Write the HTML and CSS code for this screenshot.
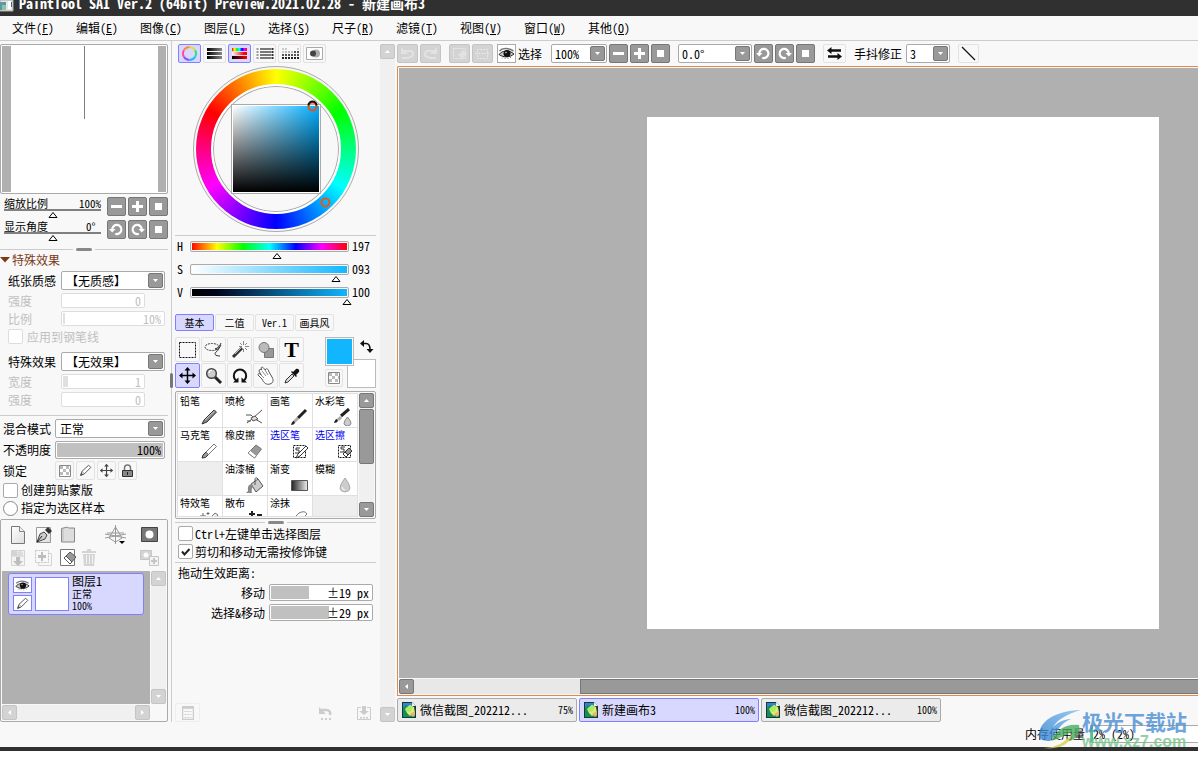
FILE: index.html
```html
<!DOCTYPE html>
<html lang="zh-CN">
<head>
<meta charset="utf-8">
<title>PaintTool SAI Ver.2</title>
<link rel="stylesheet" href="styles.css">
</head>
<body>
<svg class="defs" aria-hidden="true">
  <defs>
    <linearGradient id="g-grey"><stop offset="0" stop-color="#222"/><stop offset="1" stop-color="#eee"/></linearGradient>
    <linearGradient id="g-black"><stop offset="0" stop-color="#000"/><stop offset="1" stop-color="#888"/></linearGradient>
    <linearGradient id="g-page" x2="1" y2="1"><stop offset="0" stop-color="#fff"/><stop offset="1" stop-color="#ddd"/></linearGradient>
    <linearGradient id="g-red"><stop offset="0" stop-color="#fff"/><stop offset=".8" stop-color="#f00"/></linearGradient>
    <linearGradient id="g-dark"><stop offset="0" stop-color="#000"/><stop offset="1" stop-color="#f00"/></linearGradient>
    <linearGradient id="g-hue"><stop offset="0" stop-color="#f00"/><stop offset=".17" stop-color="#ff0"/><stop offset=".33" stop-color="#0f0"/><stop offset=".5" stop-color="#0ff"/><stop offset=".67" stop-color="#00f"/><stop offset=".83" stop-color="#f0f"/><stop offset="1" stop-color="#f00"/></linearGradient>
    <linearGradient id="g-swoosh" x1="0" y1="1" x2="1" y2="0"><stop offset="0" stop-color="#2f7fd0"/><stop offset="1" stop-color="#7cc0ee"/></linearGradient>
  </defs>
  <symbol id="i-minus" viewBox="0 0 17 17"><path d="M3 7h11v3H3z" fill="#fff"/></symbol>
  <symbol id="i-plus" viewBox="0 0 17 17"><path d="M3 7h4V3h3v4h4v3h-4v4H7v-4H3z" fill="#fff"/></symbol>
  <symbol id="i-stop" viewBox="0 0 17 17"><path d="M5 5h7v7H5z" fill="#fff"/></symbol>
  <symbol id="i-ccw" viewBox="0 0 17 17"><path d="M4.200 8.500a4.600 4.600 0 1 1 3 4.300" fill="none" stroke="#fff" stroke-width="2.200"/><path d="M1 8h6.500L4.200 11.500z" fill="#fff"/></symbol>
  <symbol id="i-cw" viewBox="0 0 17 17"><path d="M12.800 8.500a4.600 4.600 0 1 0-3 4.300" fill="none" stroke="#fff" stroke-width="2.200"/><path d="M16 8H9.500l3.300 3.500z" fill="#fff"/></symbol>
  <symbol id="i-drop" viewBox="0 0 13 13"><path d="M4 5h5L6.500 8z" fill="#fff"/></symbol>
  <symbol id="i-up" viewBox="0 0 13 13"><path d="M4 8h5L6.500 5z" fill="#fff"/></symbol>
  <symbol id="i-left" viewBox="0 0 13 13"><path d="M8 4v5L5 6.500z" fill="#fff"/></symbol>
  <symbol id="i-right" viewBox="0 0 13 13"><path d="M5 4v5l3-2.500z" fill="#fff"/></symbol>
  <symbol id="i-eye" viewBox="0 0 17 17"><path d="M1.500 6C4 3 10 2.500 15.500 6" fill="none" stroke="#777" stroke-width="1.500"/><path d="M1 9.500C4 5.500 11 4.500 16 9 12 12.500 6 13 1 9.500z" fill="#ccc" stroke="#222"/><circle cx="9" cy="8.500" r="3.500" fill="#111"/><circle cx="8" cy="7.500" r=".8" fill="#ddd"/><path d="M4 13.500l1-1M7 14v-1M10 14v-1M13 13l-1-1" stroke="#888"/></symbol>
  <symbol id="i-pencil" viewBox="0 0 17 17"><path d="M3 14l1.500-4.500L12 2.500l2.500 2.500-7.500 7.500z" fill="#fff" stroke="#444"/><path d="M3 14l1-2.500 1.500 1.500zM4.500 9.500l2.500 2.500" fill="#333" stroke="#555" stroke-width=".7"/></symbol>
  <symbol id="i-move" viewBox="0 0 19 19"><path d="M9.500 3v13M3 9.500h13" stroke="currentColor" stroke-width="1.500"/><path d="M9.500 1l3 3.500h-6zM9.500 18l3-3.500h-6zM1 9.500l3.500-3v6zM18 9.500l-3.500-3v6z" fill="currentColor"/></symbol>
  <symbol id="i-check" viewBox="0 0 12 12"><path d="M.5.500h11v11H.5z" fill="#fff" stroke="#888"/><path d="M1 1h3v3H1zM7 1h3v3H7zM4 4h3v3H4zM1 7h3v3H1zM7 7h3v3H7zM10 4h1v3h-1z" fill="#bbb"/></symbol>
  <symbol id="i-undo" viewBox="0 0 19 17"><path d="M6 6h6a3 3 0 0 1 0 6h-1" fill="none" stroke="currentColor" stroke-width="2"/><path d="M3 2v7h7zM4 12h7v2H4z" fill="currentColor"/></symbol>
  <symbol id="i-doc" viewBox="0 0 14 16"><path d="M0 0h10l4 4v12H0z" fill="#153a36"/><path d="M1 1h9v7H1z" fill="#3484cf"/><path d="M1 6l3-3 4 2 5 7v3H1z" fill="#168c5a"/><path d="M3 7l5-4 4 2 1 6-5 3-3-3z" fill="#dced71"/><path d="M4 6l4-3 3 2-3 5-4-1z" fill="#a7ed65"/><path d="M8 12l5-3v4l-2 2z" fill="#e5b76c"/><path d="M10 0v4h4z" fill="#eee"/></symbol>
</svg>

<header class="title">
  <svg class="title-icon" width="14" height="12"><path d="M0 0h13v11H0z" fill="#e5e5e5" stroke="#aaa"/><path d="M0 2h6v8H0z" fill="#5d98a3"/><path d="M2 5h4v5H2z" fill="#8fc2a8"/><path d="M8 1h3v8H8z" fill="#fff"/><path d="M11 2h1v5h-1z" fill="#278"/></svg>
  <h1>PaintTool SAI Ver.2 (64bit) Preview.2021.02.28 - 新建画布3</h1>
</header>
<nav class="menu">
  <button>文件(<u>F</u>)</button><button>编辑(<u>E</u>)</button><button>图像(<u>C</u>)</button><button>图层(<u>L</u>)</button><button>选择(<u>S</u>)</button><button>尺子(<u>R</u>)</button><button>滤镜(<u>T</u>)</button><button>视图(<u>V</u>)</button><button>窗口(<u>W</u>)</button><button>其他(<u>O</u>)</button>
</nav>

<main class="work">
  <aside class="left">
    <div class="navigator"><div class="nav-page"><i class="nav-line"></i></div></div>
    <div class="nav-row">
      <div class="nav-slide"><label for="zoom">缩放比例</label><output>100%</output><i class="rail"></i><input class="thumb" id="zoom" type="range" value="50"></div>
      <button class="sq" aria-label="缩小"><svg><use href="#i-minus"/></svg></button><button class="sq" aria-label="放大"><svg><use href="#i-plus"/></svg></button><button class="sq" aria-label="重置"><svg><use href="#i-stop"/></svg></button>
    </div>
    <div class="nav-row">
      <div class="nav-slide"><label for="angle">显示角度</label><output>0° </output><i class="rail"></i><input class="thumb" id="angle" type="range" value="50"></div>
      <button class="sq" aria-label="左转"><svg><use href="#i-ccw"/></svg></button><button class="sq" aria-label="右转"><svg><use href="#i-cw"/></svg></button><button class="sq" aria-label="重置角度"><svg><use href="#i-stop"/></svg></button>
    </div>
    <div class="splitter"><i></i></div>
    <button class="fold"><svg width="10" height="6"><path d="M0 0h10L5 5.500z" fill="#7a3a18"/></svg>特殊效果</button>
    <div class="effects">
      <div class="row"><label for="paper">纸张质感</label><span class="combo"><select id="paper"><option>【无质感】</option></select><i class="arrow"><svg><use href="#i-drop"/></svg></i></span></div>
      <div class="row off"><label for="p1">强度</label><input class="val short" id="p1" value="0" disabled></div>
      <div class="row off"><label for="p2">比例</label><input class="val tick" id="p2" value="10%" disabled></div>
      <div class="row off"><input class="box" type="checkbox" id="pen" disabled><label class="wide" for="pen">应用到钢笔线</label></div>
      <div class="row second"><label for="fx">特殊效果</label><span class="combo"><select id="fx"><option>【无效果】</option></select><i class="arrow"><svg><use href="#i-drop"/></svg></i></span></div>
      <div class="row off"><label for="p3">宽度</label><input class="val short tick wider" id="p3" value="1" disabled></div>
      <div class="row off"><label for="p4">强度</label><input class="val short" id="p4" value="0" disabled></div>
    </div>
    <div class="blend">
      <div class="row"><label for="mode">混合模式</label><span class="combo"><select id="mode"><option>正常</option></select><i class="arrow"><svg><use href="#i-drop"/></svg></i></span></div>
      <div class="row"><label for="opac">不透明度</label><input class="val full" id="opac" value="100%"></div>
      <div class="row locks"><span class="lbl">锁定</span>
        <button class="flat" aria-label="锁定透明"><svg width="12" height="12"><use href="#i-check"/></svg></button>
        <button class="flat" aria-label="锁定绘制"><svg width="15" height="15"><use href="#i-pencil"/></svg></button>
        <button class="flat" aria-label="锁定移动"><svg width="15" height="15"><use href="#i-move"/></svg></button>
        <button class="flat" aria-label="全部锁定"><svg width="13" height="13"><path d="M3.500 6V4a3 3 0 0 1 6 0v2" fill="none" stroke="#777" stroke-width="1.500"/><path d="M1.500 6.500h10v6h-10z" fill="#888" stroke="#333"/><path d="M6 8h1v3H6z" fill="#222"/></svg></button>
      </div>
      <div class="row opt"><input class="box" type="checkbox" id="clip"><label for="clip">创建剪贴蒙版</label></div>
      <div class="row opt"><input class="box round" type="radio" id="src"><label for="src">指定为选区样本</label></div>
    </div>
    <section class="layers">
      <div class="layer-tools">
        <button aria-label="新建图层"><svg width="18" height="18"><path d="M2.500.500h8l5 5v12h-13z" fill="url(#g-page)" stroke="#777"/><path d="M10.500.500v5h5" fill="#eee" stroke="#888"/></svg></button>
        <button aria-label="新建钢笔图层"><svg width="18" height="18"><path d="M2.500 1.500h14v15h-14z" fill="url(#g-page)" stroke="#999"/><path d="M3 16l3-8 4-2 3 3-2 4z" fill="#ccc" stroke="#444"/><path d="M3 16l5-6" stroke="#222"/><path d="M11 4l3-3 4 4-3 3z" fill="#333"/></svg></button>
        <button aria-label="新建图层组"><svg width="18" height="18"><path d="M2.500 2.500l6-1.500 1 1h6v14h-13z" fill="#ddd" stroke="#888"/><path d="M4 3v12" stroke="#bbb"/></svg></button>
        <span></span>
        <button aria-label="透视尺"><svg width="22" height="20"><path d="M10.500 0v19M0 9l21 4M0 13l21-4M10.500 2L4 13l6.500 4 6.500-4zM2 8h17" fill="none" stroke="#999"/><path d="M14 16h6l-3 3z" fill="#000"/></svg></button>
        <button aria-label="图层蒙版"><svg width="18" height="17"><path d="M.5 1.500h16v14H.5z" fill="#777" stroke="#444"/><circle cx="8.500" cy="8.500" r="4" fill="#fff"/></svg></button>
        <button class="dim" aria-label="向下合并"><svg width="18" height="18"><path d="M2.500 1.500h13v15h-13zM2 7h14" fill="#eee" stroke="#aaa"/><path d="M3 2h5v5H3z" fill="#aaa"/><circle cx="11" cy="5" r="3" fill="#bbb"/><path d="M7 8h4v4h3l-5 5-5-5h3z" fill="#777"/></svg></button>
        <button class="dim" aria-label="添加图层"><svg width="18" height="18"><path d="M4.500 4.500h13v12h-13z" fill="none" stroke="#aaa"/><path d="M1.500 1.500h13v12h-13z" fill="#f8f8f8" stroke="#888" stroke-dasharray="2 1"/><path d="M7 3h2v3h3v3H9v3H7V9H4V6h3z" fill="#777"/></svg></button>
        <button aria-label="清除图层"><svg width="18" height="18"><path d="M1.500.500h14v16h-14z" fill="#fff" stroke="#777"/><path d="M5 9l6-6 6 5-6 7z" fill="#999" stroke="#555"/><path d="M5 9l6 6 2-2-6-6z" fill="#fff" stroke="#555"/></svg></button>
        <button class="dim" aria-label="删除图层"><svg width="18" height="18"><path d="M3 5h12l-1 12H4zM2 2h14v2H2zM7 0h4v2H7z" fill="#aaa"/><path d="M6.500 6v9M9.500 6v9M12.500 6v9" stroke="#eee"/></svg></button>
        <span></span>
        <button class="dim" aria-label="应用蒙版"><svg width="20" height="18"><path d="M.5 1.500h11v9H.5z" fill="#aaa" stroke="#888"/><circle cx="6" cy="6" r="2.500" fill="#fff"/><path d="M9.500 7.500h9v9h-9z" fill="#eee" stroke="#888"/><path d="M13 9h2v2h2v2h-2v2h-2v-2h-2v-2h2z" fill="#888"/></svg></button>
      </div>
      <div class="layer-view">
        <div class="layer-list">
          <article class="layer">
            <div class="layer-flags"><button aria-label="显示"><svg width="17" height="15"><use href="#i-eye"/></svg></button><button aria-label="绘制"><svg width="17" height="15"><use href="#i-pencil"/></svg></button></div>
            <div class="layer-thumb"></div>
            <div class="layer-info"><b>图层1</b><span>正常</span><span>100%</span></div>
          </article>
        </div>
        <div class="sb v"><button class="sbb pale" aria-label="上"><svg><use href="#i-up"/></svg></button><button class="sbb pale" aria-label="下"><svg><use href="#i-drop"/></svg></button></div>
        <div class="sb h"><button class="sbb pale" aria-label="左"><svg><use href="#i-left"/></svg></button><button class="sbb pale" aria-label="右"><svg><use href="#i-right"/></svg></button></div>
      </div>
    </section>
  </aside>

  <section class="mid">
    <i class="grip"></i>
    <div class="modes">
      <button class="on" aria-label="色环"><svg width="17" height="17"><g fill="none" stroke-width="2"><path d="M8.500 2a6.500 6.500 0 0 1 5.600 3.200" stroke="#dd4"/><path d="M14.100 5.200a6.500 6.500 0 0 1 0 6.500" stroke="#3d7"/><path d="M14.100 11.700a6.500 6.500 0 0 1-5.600 3.300" stroke="#2bf"/><path d="M8.500 15a6.500 6.500 0 0 1-5.600-3.300" stroke="#85f"/><path d="M2.900 11.700a6.500 6.500 0 0 1 0-6.500" stroke="#f4a"/><path d="M2.900 5.200A6.500 6.500 0 0 1 8.500 2" stroke="#f84"/></g></svg></button>
      <button aria-label="RGB"><svg width="17" height="13"><path d="M1 1h15v3H1zM1 5h15v3H1zM1 9h15v3H1z" fill="url(#g-black)"/></svg></button>
      <button class="on" aria-label="HSV"><svg width="17" height="13"><path d="M1 1h15v3H1z" fill="url(#g-hue)"/><path d="M1 5h15v3H1z" fill="url(#g-red)"/><path d="M1 9h15v3H1z" fill="url(#g-dark)"/></svg></button>
      <button aria-label="混色"><svg width="18" height="13"><path d="M1.500 1v12" stroke="#999" stroke-width="2" stroke-dasharray="2 1"/><path d="M16.500 1v12" stroke="#333" stroke-width="2" stroke-dasharray="2 1"/><path d="M4 1h11v2H4zM4 4h11v2H4zM4 7h11v2H4zM4 10h11v2H4z" fill="#777"/></svg></button>
      <button aria-label="色板"><svg width="18" height="13"><g stroke-width="2" stroke-dasharray="2 1"><path d="M1 2h5M1 5h2M16 2h2" stroke="#ccc"/><path d="M4 5h8" stroke="#bbb"/><path d="M13 5h5M1 8h17" stroke="#555"/><path d="M1 11h17" stroke="#222"/></g></svg></button>
      <button aria-label="便签"><svg width="17" height="13"><path d="M.5.500h16v12H.5z" fill="#fff" stroke="#aaa"/><circle cx="10" cy="6.500" r="4" fill="#aaa"/><circle cx="7" cy="6.500" r="3" fill="#444"/></svg></button>
    </div>
    <div class="wheel"><div class="ring"></div><div class="disc"></div><div class="sv"></div>
      <svg class="marks" width="168" height="168"><circle cx="120.500" cy="41.500" r="4" fill="none" stroke="#f0500f" stroke-width="2"/><path d="M116.500 40.500a4 4 0 0 1 8 0" fill="none" stroke="#111" stroke-width="2"/><path d="M118.500 40.500h4" stroke="#fff"/><circle cx="133.500" cy="137.500" r="4" fill="none" stroke="#e8561a" stroke-width="2"/></svg></div>
    <div class="hsv">
      <div class="hrow"><label for="h">H</label><div><i class="bar hue"></i><input class="thumb" id="h" type="range" max="360" value="197"></div><output>197</output></div>
      <div class="hrow"><label for="s">S</label><div><i class="bar sat"></i><input class="thumb" id="s" type="range" value="93"></div><output>093</output></div>
      <div class="hrow"><label for="v">V</label><div><i class="bar bri"></i><input class="thumb" id="v" type="range" value="100"></div><output>100</output></div>
    </div>
    <div class="tabs"><button class="on">基本</button><button>二值</button><button>Ver.1</button><button>画具风</button></div>
    <div class="toolset">
      <div class="tools">
        <button aria-label="选框"><svg width="20" height="20"><path d="M1.500 2.500h16v15h-16z" fill="none" stroke="#111" stroke-dasharray="2 1"/></svg></button>
        <button aria-label="套索"><svg width="20" height="20"><ellipse cx="8" cy="7" rx="7" ry="3.500" fill="none" stroke="#333" stroke-dasharray="2 1"/><path d="M17 3c-1 3-3 5-6 6 3 0 4 1 1 3-2 2-1 4 4 4M17 5l-3 5" fill="none" stroke="#333"/></svg></button>
        <button aria-label="魔棒"><svg width="20" height="20"><path d="M3 17l9-9" stroke="#333" stroke-width="3"/><path d="M5 14l6-6" stroke="#bbb"/><path d="M13.500 1v4M13.500 9v3M9 6.500h3M15 6.500h4M10 3l2 2M17 3l-2 2M15 8l2 2" stroke="#888"/></svg></button>
        <button aria-label="形状"><svg width="20" height="20"><path d="M8.500 8.500h9v9h-9z" fill="#999" stroke="#777"/><circle cx="8" cy="7.500" r="5" fill="#bbb" stroke="#777"/></svg></button>
        <button class="type" aria-label="文字">T</button>
        <button class="on" aria-label="移动"><svg width="19" height="19"><use href="#i-move"/></svg></button>
        <button aria-label="缩放"><svg width="20" height="20"><path d="M11 11l6 6" stroke="#222" stroke-width="3"/><circle cx="7.500" cy="7.500" r="4.800" fill="#ccc" stroke="#444" stroke-width="1.500"/><path d="M5 7a3 3 0 0 1 3-3" stroke="#fff" fill="none"/></svg></button>
        <button aria-label="旋转"><svg width="20" height="20"><path d="M6 14.500a6.200 6.200 0 1 1 8 0" fill="none" stroke="#111" stroke-width="2"/><path d="M3 16.500h5.500v-5zM17 16.500h-5.500v-5z" fill="#111"/></svg></button>
        <button aria-label="抓手"><svg width="20" height="20"><path d="M6 13L2 9c0-2 2-2 3 0L3 5c0-2 2-2 3-1L5 2c1-2 3 0 4 2l1-1c1-1 2 0 3 3l3 5c2 4 1 6-2 7-4 1-6-1-8-5z" fill="#fff" stroke="#555"/><path d="M5 9l3 3M6 5l4 5M9 4l3 5" stroke="#888" fill="none"/></svg></button>
        <button aria-label="吸管"><svg width="20" height="20"><path d="M3 17l1-3 6-6 2 2-6 6z" fill="#ddd" stroke="#333"/><path d="M9 6l5 5 1-1-1-1 3-3c1-2-1-4-3-3l-3 3-1-1z" fill="#111"/></svg></button>
      </div>
      <div class="colors"><button class="fg" aria-label="前景色"></button><button class="swap" aria-label="交换"><svg width="15" height="15"><path d="M3 4.500h4q4 0 4 6" fill="none" stroke="#111" stroke-width="1.500"/><path d="M1 4.500L5 1v7zM7.500 10h7L11 14z" fill="#111"/></svg></button><button class="flat clear" aria-label="透明色"><svg width="12" height="12"><use href="#i-check"/></svg></button><button class="bg" aria-label="背景色"></button></div>
    </div>
    <div class="brushes">
      <div class="brush-grid">
        <button>铅笔<svg width="20" height="18"><path d="M3 16l2-4L15 2l2.500 2L8 14z" fill="#888" stroke="#333"/><path d="M6 12L15.500 3" stroke="#ccc"/></svg></button>
        <button>喷枪<svg width="20" height="18"><path d="M2 7h5l4 4 7 4M3 15l5-4L18 2M3 13h4" fill="none" stroke="#555"/><path d="M7 10l4-2 3 3-5 2z" fill="#ddd" stroke="#555"/></svg></button>
        <button>画笔<svg width="20" height="18"><path d="M9 10l8-8" stroke="#222" stroke-width="3"/><path d="M5 14l4-4" stroke="#aaa" stroke-width="3"/><path d="M2 17q1-4 3-4l1 2q-1 2-4 2z" fill="#222"/></svg></button>
        <button>水彩笔<svg width="20" height="18"><path d="M7 8l8-7" stroke="#222" stroke-width="3"/><path d="M4 12l3-3" stroke="#aaa" stroke-width="3"/><path d="M0 15q1-4 3-4l1 2q-1 2-4 2z" fill="#222"/><path d="M13.500 9q7 8 0 9-7-1 0-9z" fill="#ccc" stroke="#888"/></svg></button>
        <button>马克笔<svg width="20" height="18"><path d="M3 16l1-3 3-3 2.500 2.500-3 3z" fill="#999" stroke="#333"/><path d="M7 10l8-8 2.500 2.500-8 8z" fill="#fff" stroke="#777"/></svg></button>
        <button>橡皮擦<svg width="20" height="18"><path d="M4 11l8-8 5.500 4-7 9z" fill="#999" stroke="#777"/><path d="M4 11l6.500 5 2-2.500L6.500 8.500z" fill="#fff" stroke="#888"/></svg></button>
        <button class="sel">选区笔<svg width="20" height="18"><path d="M4.500 3.500h12v12h-12z" fill="none" stroke="#111" stroke-dasharray="2 1"/><path d="M11 6H7v2h3v3H6" fill="none" stroke="#333"/><path d="M7 16l2-4 8-8 2 2-8 8z" fill="#fff" stroke="#333"/></svg></button>
        <button class="sel">选区擦<svg width="20" height="18"><path d="M4.500 3.500h12v12h-12z" fill="none" stroke="#111" stroke-dasharray="2 1"/><path d="M11 5H7v2h3v3H6" fill="none" stroke="#333"/><path d="M9 12l6-6 3 3-6 6z" fill="#999" stroke="#333"/><path d="M9 12l3 3 2-2-3-3z" fill="#fff" stroke="#333"/></svg></button>
        <span class="empty"></span>
        <button>油漆桶<svg width="20" height="18"><path d="M7 8l7-5 5 7-7 6z" fill="#ccc" stroke="#555"/><path d="M14 3q-3-3-3 1v5" fill="none" stroke="#555"/><path d="M8 8q-5 0-4 7l-2 2h6q-1-4 1-6z" fill="#888"/></svg></button>
        <button>渐变<svg width="20" height="18"><path d="M2.500 4.500h16v10h-16z" fill="url(#g-grey)" stroke="#555"/></svg></button>
        <button>模糊<svg width="20" height="18"><path d="M11 2q10 13 0 14-10-1 0-14z" fill="#ccc" stroke="#aaa"/><path d="M8 11q0 3 3 3" stroke="#fff" fill="none"/></svg></button>
        <button>特效笔<svg width="20" height="18"><path d="M4 3v6M1 6h6M9 2v3M7.500 3.500h3" stroke="#666"/><path d="M9 10l7-7 3 2-6 7z" fill="#eee" stroke="#777"/></svg></button>
        <button>散布<svg width="20" height="18"><path d="M8 1v6M5 4h6" stroke="#222" stroke-width="2"/><path d="M13 4h5v4h-5z" fill="#222"/></svg></button>
        <button>涂抹<svg width="20" height="18"><path d="M4 9l6-6q6-3 8 1l-7 7z" fill="#fff" stroke="#777"/></svg></button>
        <span class="empty"></span>
      </div>
      <div class="sb v"><button class="sbb" aria-label="上"><svg><use href="#i-up"/></svg></button><i class="sb-thumb"></i><button class="sbb" aria-label="下"><svg><use href="#i-drop"/></svg></button></div>
    </div>
    <div class="splitter mid-split"><i></i></div>
    <div class="move-opts">
      <div class="row opt"><input class="box" type="checkbox" id="ctrl"><label for="ctrl">Ctrl+左键单击选择图层</label></div>
      <div class="row opt"><input class="box" type="checkbox" id="cut" checked><label for="cut">剪切和移动无需按修饰键</label></div>
    </div>
    <div class="drag">
      <p>拖动生效距离:</p>
      <div class="row"><label for="d1">移动</label><input class="val f19" id="d1" value="±19 px"></div>
      <div class="row"><label for="d2">选择&amp;移动</label><input class="val f29" id="d2" value="±29 px"></div>
    </div>
    <div class="mid-foot">
      <button class="flat" aria-label="菜单"><svg width="12" height="14"><path d="M.5.500h11v13H.5zM1 2h10" fill="none" stroke="#ccc" stroke-width="1.500"/><path d="M2.500 5.500h7M2.500 8.500h7M2.500 11.500h7" stroke="#ccc" stroke-dasharray="2 1"/></svg></button>
      <span></span>
      <button aria-label="还原"><svg width="16" height="16"><path d="M3 5h5q5 0 4 5" fill="none" stroke="#ccc" stroke-width="2.500"/><path d="M1 2v7h7z" fill="#ccc"/><path d="M3 13h2v2H3zM7 13h2v2H7zM11 13h2v2h-2z" fill="#ccc"/></svg></button>
      <button aria-label="保存设置"><svg width="16" height="16"><path d="M5 2.500H1.500v12h13v-12H11" fill="none" stroke="#ccc"/><path d="M6 1h4v5h3l-5 4-5-4h3zM4 12h2v1.500H4zM7 12h2v1.500H7zM10 12h2v1.500h-2z" fill="#ccc"/></svg></button>
    </div>
  </section>
  <div class="sb v mid-sb"><button class="sbb pale" aria-label="上"><svg><use href="#i-up"/></svg></button><button class="sbb pale" aria-label="下"><svg><use href="#i-drop"/></svg></button></div>

  <section class="right">
    <div class="bar-top">
      <div class="grp g1"><button class="ghost" aria-label="撤销"><svg width="19" height="17"><use href="#i-undo"/></svg></button><button class="ghost" aria-label="重做"><svg class="flip" width="19" height="17"><use href="#i-undo"/></svg></button></div>
      <div class="grp g2"><button class="ghost" aria-label="取消选择"><svg width="17" height="17"><path d="M2.500 3.500h12v10h-12z" fill="none" stroke="#e8e8e8" stroke-dasharray="2 1"/><path d="M7 10l5-5 4 4-5 5z" fill="#e2e2e2"/></svg></button><button class="ghost" aria-label="反选"><svg width="17" height="17"><path d="M3.500 8V4.500h10V8M1 8.500h15M3.500 10v3.500h10V10" fill="none" stroke="#e8e8e8" stroke-dasharray="2 1"/></svg></button></div>
      <div class="grp g3"><button class="eye" id="selshow" aria-label="显示选区"><svg width="17" height="17"><use href="#i-eye"/></svg></button><label for="selshow">选择</label></div>
      <div class="grp g4"><span class="combo c-zoom"><select aria-label="缩放"><option>100%</option></select><i class="arrow"><svg><use href="#i-drop"/></svg></i></span><button class="sq" aria-label="缩小"><svg><use href="#i-minus"/></svg></button><button class="sq" aria-label="放大"><svg><use href="#i-plus"/></svg></button><button class="sq" aria-label="重置"><svg><use href="#i-stop"/></svg></button></div>
      <div class="grp g4"><span class="combo c-rot"><select aria-label="角度"><option>0.0°</option></select><i class="arrow"><svg><use href="#i-drop"/></svg></i></span><button class="sq" aria-label="左转"><svg><use href="#i-ccw"/></svg></button><button class="sq" aria-label="右转"><svg><use href="#i-cw"/></svg></button><button class="sq" aria-label="重置"><svg><use href="#i-stop"/></svg></button></div>
      <button class="flat wide-btn" aria-label="水平翻转"><svg width="17" height="15"><path d="M4 4.500h11M2 10.500h11" stroke="#111" stroke-width="2.500"/><path d="M1 4.500L5.500 1v7zM16 10.500L11.500 7v7z" fill="#111"/></svg></button>
      <div class="grp g5"><label for="stab">手抖修正</label><span class="combo c-stab"><select id="stab"><option>3</option></select><i class="arrow"><svg><use href="#i-drop"/></svg></i></span></div>
      <button class="flat line-btn" aria-label="直线"><svg width="17" height="17"><path d="M2 2l13 13" stroke="#111" stroke-width="1.200"/></svg></button>
    </div>
    <div class="frame">
      <div class="canvas"><div class="paper"></div></div>
      <div class="sb h hs"><button class="sbb" aria-label="左"><svg><use href="#i-left"/></svg></button><i class="hs-thumb"></i></div>
    </div>
    <div class="docs">
      <button><svg width="14" height="16"><use href="#i-doc"/></svg><span>微信截图_202212...</span><small>75%</small></button>
      <button class="on"><svg width="14" height="16"><use href="#i-doc"/></svg><span>新建画布3</span><small>100%</small></button>
      <button><svg width="14" height="16"><use href="#i-doc"/></svg><span>微信截图_202212...</span><small>100%</small></button>
    </div>
    <div class="status"><span>内存使用量</span><div class="meter">2% (2%)</div></div>
    <div class="mark" aria-hidden="true">
      <svg width="44" height="40"><path d="M1 27C0 12 16 1 43 0 29 4 19 10 15 17c6-6 13-8 18-8C20 14 17 27 12 31 7 31 3 30 1 27z" fill="url(#g-swoosh)"/><path d="M13 31q9-18 28-16c2 8-4 17-15 17 7-4 8-8 8-10-8 3-14 7-21 9z" fill="#4aac62"/><path d="M5 38q17 0 29-14c-2 10-12 16-29 14z" fill="#d5cf51"/></svg>
      <div><b>极光下载站</b><i>www.xz7.com</i></div>
    </div>
  </section>
</main>
<footer class="edge"></footer>
</body>
</html>
```
FILE: styles.css
```css
* { box-sizing: border-box; }
body {
  margin: 0;
  min-height: 100vh;
  display: flex;
  flex-direction: column;
  background: #f8f8f8;
  color: #000;
  font: 12px/14px "Noto Sans Mono CJK SC", "Noto Sans CJK SC", sans-serif;
}
button, input, select { font: inherit; color: inherit; margin: 0; padding: 0; }
button { background: none; border: 0; display: flex; align-items: center; justify-content: center; flex: none; }
svg { display: block; flex: none; }
i, b { font-style: normal; font-weight: normal; }
.defs { position: absolute; width: 0; height: 0; }

.title { height: 16px; display: flex; align-items: flex-start; gap: 5px; background: #303030; color: #fff; overflow: hidden; }
.title h1 { margin: 0; font-size: 14px; line-height: 6px; font-weight: bold; white-space: pre; }
.menu { height: 25px; display: flex; gap: 22px; padding: 0 12px; border-bottom: 1px solid #ccc; }
.menu button { display: block; width: 42px; white-space: nowrap; }
.menu u { text-underline-offset: 1px; }

.work { flex: 1; display: grid; grid-template-columns: 171px 209px 15px minmax(0, 1fr); }
.edge { background: #303030; height: 11px; border-bottom: 7px solid #fff; }

/* shared controls */
.sq { width: 19px; height: 19px; background: #999; border: 1px solid #777; border-radius: 2px; }
.sq svg { width: 17px; height: 17px; }
.flat { width: 19px; height: 19px; border: 1px solid #e2e2e2; border-radius: 2px; }
.combo { display: grid; flex: 1; height: 19px; background: #fff; border: 1px solid #aaa; border-radius: 2px; min-width: 0; }
.combo select { grid-area: 1 / 1; appearance: none; border: 0; background: none; padding: 0 4px; min-width: 0; line-height: 17px; }
.arrow { grid-area: 1 / 1; justify-self: end; align-self: center; margin-right: 1px; width: 15px; height: 15px; background: #999; border: 1px solid #777; border-radius: 2px; pointer-events: none; }
.arrow svg, .sbb svg { width: 13px; height: 13px; }
.val { height: 15px; flex: 1; min-width: 0; width: 40px; background: #fff; border: 1px solid #aaa; border-radius: 2px; text-align: right; padding: 0 3px; line-height: 13px; }
.box { appearance: none; width: 15px; height: 15px; flex: none; background: #fff; border: 1px solid #aaa; border-radius: 2px; }
.box.round { border-radius: 50%; border-color: #888; }
.box:checked { background: #fff url("data:image/svg+xml,%3Csvg xmlns='http://www.w3.org/2000/svg' width='13' height='13'%3E%3Cpath d='M3 6.500l2.500 3L10.500 4' fill='none' stroke='%23222' stroke-width='2'/%3E%3C/svg%3E"); }
.row { display: flex; align-items: center; white-space: nowrap; }
.thumb { display: block; appearance: none; height: 8px; background: none; width: calc(100% + 6px); margin: -1px -3px 0; }
.thumb::-webkit-slider-thumb { appearance: none; width: 10px; height: 8px; background: url("data:image/svg+xml,%3Csvg xmlns='http://www.w3.org/2000/svg' width='10' height='8'%3E%3Cpath d='M1 7.500L5 2.500 9 7.500z' fill='%23fff' stroke='%23000'/%3E%3C/svg%3E"); }
.splitter { display: flex; align-items: center; gap: 3px; height: 3px; }
.splitter::before, .splitter::after { content: ""; flex: 1; height: 1px; background: #ccc; }
.splitter i { width: 16px; height: 3px; border-radius: 2px; background: #888; }
.sb { display: flex; justify-content: space-between; background: #f0f0f0; }
.sb.v { flex-direction: column; width: 15px; }
.sbb { width: 15px; height: 15px; background: #999; border: 1px solid #777; border-radius: 2px; }
.sbb.pale { background: #d3d3d3; border-color: #c4c4c4; }

/* left column */
.left { display: flex; flex-direction: column; padding: 3px 3px 25px 0; }
.navigator { height: 150px; padding: 1px 9px 1px 10px; background: #b0b0b0; border: 1px solid #aaa; border-radius: 2px; box-shadow: inset 0 0 0 1px #fff; }
.nav-page { height: 100%; background: #fff; }
.nav-line { display: block; width: 1px; height: 73px; margin-left: 73px; background: #808080; }
.nav-row { display: flex; gap: 2px; height: 19px; margin: 3px 0 1px; }
.nav-slide { flex: 1; margin: 0 4px; display: grid; grid-template-columns: 1fr auto; grid-template-rows: 12px 2px 8px; line-height: 12px; }
.nav-slide label, .nav-slide output { font-size: 11px; white-space: pre; }
.rail { grid-column: 1 / 3; background: #808080; }
.nav-slide .thumb { grid-column: 1 / 3; }
.left > .splitter { margin: 8px 0 3px; }
.fold { justify-content: flex-start; gap: 2px; height: 12px; color: #7a3a18; }
.effects { padding: 5px 3px 8px 8px; display: flex; flex-direction: column; gap: 3px; border-bottom: 1px solid #ccc; }
.effects label { width: 53px; }
.effects label.wide { width: auto; margin-left: 4px; }
.effects .row { height: 15px; }
.effects .row:first-child, .effects .second { height: 19px; }
.effects .second { margin-top: 5px; }
.off { color: #c0c0c0; }
.off .val, .off .box { border-color: #ddd; }
.val.short { margin-right: 20px; }
.val.tick { background: linear-gradient(#e0e0e0, #e0e0e0) 1px 1px / 2px 11px no-repeat #fff; }
.val.tick.wider { background-size: 5px 11px; }
.blend { padding: 3px; display: flex; flex-direction: column; gap: 2px; }
.blend .row { height: 19px; }
.blend .row > label, .lbl { width: 52px; }
.val.full { height: 18px; background: #c0c0c0; box-shadow: inset 0 0 0 1px #fff; }
.blend .flat { color: #444; }
.blend .flat + .flat { margin-left: 2px; }
.row.opt { height: 15px; gap: 2px; margin-bottom: 1px; }
.blend .opt { height: 16px; gap: 3px; margin: 0; }
.blend .row.opt > label { width: auto; }
.layers { flex: 1; display: flex; flex-direction: column; border: 1px solid #aaa; border-radius: 2px; padding: 1px; }
.layer-tools { display: grid; grid-template-columns: 25px 25px 25px 1fr 36px 32px; grid-auto-rows: 23px; height: 50px; padding: 2px 0 0 3px; }
.dim { opacity: .45; }
.layer-view { flex: 1; display: grid; grid-template-columns: 1fr 15px; grid-template-rows: 1fr 15px; gap: 1px; }
.layer-list { background: #b0b0b0; padding: 2px 6px; }
.layer { height: 42px; display: flex; gap: 3px; padding: 3px 4px; background: #d8d8ff; border: 1px solid #8080ff; border-radius: 3px; }
.layer-flags { display: flex; flex-direction: column; gap: 2px; }
.layer-flags button { width: 19px; height: 16px; background: #fff; border: 1px solid #8080ff; }
.layer-thumb { width: 34px; height: 34px; background: #fff; border: 1px solid #8080ff; }
.layer-info { display: flex; flex-direction: column; line-height: 12px; font-size: 10px; }
.layer-info b { font-size: 12px; line-height: 14px; margin-top: -3px; }

/* colour and tool column */
.mid { position: relative; display: flex; flex-direction: column; padding: 3px 3px 0 3px; border-left: 1px solid #ccc; margin-bottom: 25px; }
.grip { position: absolute; left: -2px; top: 332px; width: 3px; height: 15px; border-radius: 2px; background: #777; }
.modes { display: flex; gap: 2px; padding-left: 3px; }
.modes button { width: 23px; height: 19px; border: 1px solid #e2e2e2; border-radius: 2px; }
.on, .modes .on { background: #d8d8ff; border-color: #8080ff; }
.wheel { display: grid; place-items: center; width: 166px; height: 166px; margin: 3px 0 3px 18px; border: 1px solid #aaa; border-radius: 50%; }
.wheel > * { grid-area: 1 / 1; }
.ring { width: 160px; height: 160px; border-radius: 50%; background: conic-gradient(#ff0, #0f0 60deg, #0ff 120deg, #00f 180deg, #f0f 240deg, #f00 300deg, #ff0); }
.disc { width: 130px; height: 130px; border-radius: 50%; background: #f8f8f8; border: 2px solid #fff; box-shadow: inset 0 0 0 1px #aaa; }
.sv { width: 90px; height: 90px; border: 1px solid #aaa; padding: 1px; background: linear-gradient(to top, #000, transparent) content-box, linear-gradient(to right, #fff, #00aeff) content-box, #fff; }
.marks { margin: -2px; }
.hsv { border-top: 1px solid #ccc; padding: 5px 0 4px 2px; margin-right: 1px; }
.hrow { display: grid; grid-template-columns: 13px 159px 22px; height: 23px; line-height: 10px; }
.hrow output { padding-left: 3px; }
.bar { display: block; height: 11px; border: 1px solid #aaa; border-radius: 2px; padding: 1px; background-clip: content-box; background-color: #fff; }
.hue { background-image: linear-gradient(to right, #f00, #ff0, #0f0, #0ff, #00f, #f0f, #f00); }
.sat { background-image: linear-gradient(to right, #fff, #12b6ff); }
.bri { background-image: linear-gradient(to right, #000, #00051f 17%, #12b6ff); }
.tabs { display: flex; gap: 1px; font-size: 10px; }
.tabs button { width: 39px; height: 17px; border: 1px solid #e2e2e2; border-radius: 2px; }
.tabs .on, .tools .on { border-color: #8080ff; }
.toolset { display: flex; justify-content: space-between; padding: 6px 1px 3px 0; }
.tools { display: grid; grid-template-columns: repeat(5, 25px); grid-auto-rows: 25px; gap: 1px; }
.tools button { border: 1px solid #e2e2e2; border-radius: 2px; }
.tools .type { font: bold 22px/22px "Liberation Serif", serif; }
.colors { display: grid; grid-template-columns: repeat(51, 1px); grid-template-rows: repeat(51, 1px); }
.fg { grid-area: 1 / 1 / 30 / 30; background: #12b6ff; z-index: 1; }
.bg { grid-area: 23 / 23 / 52 / 52; background: #fff; }
.fg, .bg { border: 1px solid #bbb; box-shadow: inset 0 0 0 1px #fff; }
.swap { grid-area: 3 / 35 / 18 / 50; }
.clear { grid-area: 33 / 1 / 51 / 19; width: 18px; height: 18px; }
.brushes { height: 128px; display: flex; gap: 1px; margin-right: 1px; padding: 1px; border: 1px solid #aaa; border-radius: 2px; }
.brush-grid { flex: 1; display: grid; grid-template-columns: repeat(4, 1fr); grid-auto-rows: 33px; gap: 1px; background: #e0e0e0; border: 1px solid #e0e0e0; overflow: hidden; }
.brush-grid button { display: flex; flex-direction: column; align-items: stretch; justify-content: flex-start; background: #fff; font-size: 10px; line-height: 14px; text-align: left; padding-left: 2px; color: #000; }
.brush-grid button svg { align-self: flex-end; margin-right: 3px; }
.brush-grid .sel { color: #0000f0; }
.empty { background: #eee; }
.sb-thumb { height: 55px; margin-bottom: 38px; background: #999; border: 1px solid #777; border-radius: 2px; }
.mid-split { margin: 2px 1px 2px 0; }
.move-opts { padding: 0 3px 2px; display: flex; flex-direction: column; gap: 2px; border-bottom: 1px solid #ccc; margin-right: 1px; }
.drag { padding: 2px 4px 0 3px; }
.drag p { margin: 0 0 4px; line-height: 15px; }
.drag .row { height: 17px; margin-bottom: 3px; }
.drag label { width: 87px; margin-right: 4px; text-align: right; }
.drag .val { height: 17px; }
.f19 { background: linear-gradient(#c0c0c0, #c0c0c0) 1px 1px / 38px 13px no-repeat #fff; }
.f29 { background: linear-gradient(#c0c0c0, #c0c0c0) 1px 1px / 58px 13px no-repeat #fff; }
.mid-foot { margin-top: auto; display: grid; grid-template-columns: 25px 1fr 26px 26px; column-gap: 12px; height: 19px; }
.mid-foot .flat { width: 25px; border-color: #eee; }
.mid-sb { margin: 3px 0 25px; }

/* canvas column */
.right { position: relative; padding: 3px 0 0 2px; display: flex; flex-direction: column; }
.bar-top { display: flex; height: 22px; align-items: flex-start; white-space: nowrap; line-height: 19px; }
.grp { display: flex; gap: 2px; }
.g1, .g4 { margin-right: 8px; }
.g2 { margin-right: 4px; }
.g3 { margin-right: 9px; }
.ghost { width: 21px; height: 19px; background: #d3d3d3; border: 1px solid #c4c4c4; border-radius: 2px; color: #e2e2e2; }
.flip { transform: scaleX(-1); }
.eye { width: 19px; height: 19px; background: #fff; border: 1px solid #aaa; }
.c-zoom { flex: none; width: 56px; }
.c-rot { flex: none; width: 74px; }
.c-stab { flex: none; width: 44px; }
.bar-top .combo select { padding: 0 3px; }
.wide-btn { width: 23px; }
.g5 { gap: 4px; margin: 0 8px; }
.line-btn { width: 21px; }
.frame { flex: 1; display: flex; flex-direction: column; border: 1px solid #e08a50; border-right: 0; padding: 1px 0 1px 1px; border-radius: 2px 0 0 0; }
.canvas { flex: 1; display: flex; justify-content: flex-end; background: #b0b0b0; padding: 49px 39px; }
.paper { width: 512px; height: 512px; background: #fff; }
.hs { height: 15px; margin-top: 1px; background: #e8e8e8; }
.hs-thumb { width: 618px; background: #999; border: 1px solid #777; border-right: 0; }
.docs { display: flex; gap: 2px; padding-top: 2px; }
.docs button { width: 180px; height: 24px; justify-content: flex-start; gap: 4px; padding: 0 3px 0 4px; background: #ebebeb; border: 1px solid #aaa; border-radius: 2px; white-space: nowrap; }
.docs .on { background: #d8d8ff; border-color: #8080ff; }
.docs small { margin-left: auto; font-size: 10px; }
.status { display: flex; justify-content: flex-end; align-items: center; gap: 5px; height: 18px; margin: 3px 0 4px; }
.meter { width: 108px; height: 18px; border: 1px solid #aaa; border-right: 0; box-shadow: inset 2px 0 #2fd18b; line-height: 16px; padding-left: 2px; background: #fff; }
.mark { position: absolute; right: 11px; bottom: -3px; display: flex; opacity: .8; pointer-events: none; }
.mark b { display: block; font: bold 21px/22px "Noto Sans CJK SC", sans-serif; color: #4a8fd3; }
.mark i { display: block; margin-top: 2px; font: bold 16px/16px "Liberation Sans", sans-serif; color: #7ac68c; }
```
